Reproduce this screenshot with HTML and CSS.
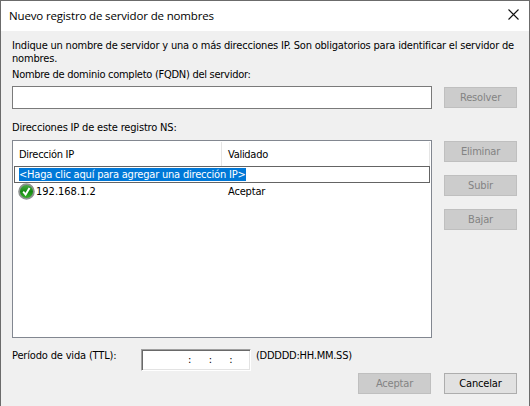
FILE: index.html
```
<!DOCTYPE html>
<html lang="es">
<head>
<meta charset="utf-8">
<title>Nuevo registro de servidor de nombres</title>
<link rel="stylesheet" href="styles.css">
</head>
<body>
<main class="dialog">
  <header class="titlebar">
    <h1 class="title">Nuevo registro de servidor de nombres</h1>
    <svg class="close" width="11" height="11" viewBox="0 0 11 11"><path d="M.5.5l10 10M10.500.5l-10 10" stroke="#111" stroke-width="1.1" fill="none"/></svg>
  </header>
  <div class="content">
    <p class="intro"><span class="intro-first">Indique un nombre de servidor y una o más direcciones IP. Son obligatorios para identificar el servidor de</span><br>nombres.</p>
    <p class="label fqdn">Nombre de dominio completo (FQDN) del servidor:</p>
    <div class="row name-row">
      <div class="field"></div>
      <div class="btn disabled">Resolver</div>
    </div>
    <p class="label ns">Direcciones IP de este registro NS:</p>
    <div class="row">
      <div class="list">
        <div class="list-head"><div class="col first">Dirección IP</div><div class="col">Validado</div></div>
        <div class="edit"><span class="selected">&lt;Haga clic aquí para agregar una dirección IP&gt;</span></div>
        <div class="item">
          <svg class="check" width="17" height="17" viewBox="0 0 17 17">
            <defs><linearGradient id="g" x1="0" y1="0" x2="0" y2="1"><stop offset="0" stop-color="#4fae4c"/><stop offset=".5" stop-color="#168a12"/><stop offset="1" stop-color="#39b52c"/></linearGradient></defs>
            <circle cx="8.500" cy="8.500" r="7.400" fill="url(#g)" stroke="#8d9290" stroke-width="1.800"/>
            <path d="M5.200 8.700l2.400 2.900 3.900-6.600" fill="none" stroke="#fff" stroke-width="1.900"/>
          </svg>
          <span class="ip">192.168.1.2</span><span class="status">Aceptar</span>
        </div>
      </div>
      <div class="actions">
        <div class="btn disabled">Eliminar</div>
        <div class="btn disabled">Subir</div>
        <div class="btn disabled">Bajar</div>
      </div>
    </div>
    <div class="ttl">
      <span class="ttl-label">Período de vida (TTL):</span>
      <div class="ttl-field"><span>:</span><span>:</span><span>:</span></div>
      <span class="format">(DDDDD:HH.MM.SS)</span>
    </div>
    <footer class="footer">
      <div class="btn disabled">Aceptar</div>
      <div class="btn">Cancelar</div>
    </footer>
  </div>
</main>
</body>
</html>
```
FILE: styles.css
```
* { box-sizing: border-box; }
body { margin: 0; }
p, h1 { margin: 0; font-weight: normal; }
.dialog {
  width: 530px; height: 406px; overflow: hidden;
  background: #f0f0f0; color: #000;
  border: 1px solid #6b6b6b; border-bottom: 0;
  font: 11px/13px "DejaVu Sans Condensed", "DejaVu Sans", sans-serif;
  font-stretch: condensed;
  letter-spacing: -0.17px;
  white-space: nowrap;
}
.titlebar { height: 30px; background: #fff; display: flex; justify-content: space-between; padding: 0 10px 0 8px; }
.title { font: 11.5px/16px "Open Sans", sans-serif; padding-top: 7px; letter-spacing: -0.15px; }
.close { margin-top: 8px; }
.content { padding: 8px 11px 0; }
.intro { height: 26px; }
.intro-first { letter-spacing: -0.19px; }
.label { height: 13px; }
.fqdn { margin-top: 3px; letter-spacing: -0.27px; }
.row { display: flex; gap: 12px; }
.name-row { margin-top: 5px; }
.field { width: 420px; height: 23px; background: #fff; border: 1px solid #7a7a7a; }
.btn {
  width: 73px; height: 21px; border: 1px solid #adadad; background: #e1e1e1;
  text-align: center; line-height: 20px;
}
.disabled { background: #ccc; border-color: #bfbfbf; color: #838383; }
.name-row .btn { margin-top: 1px; }
.ns { margin: 12px 0 6px; }
.list { width: 420px; height: 198px; background: #fff; border: 1px solid #828790; padding: 1px; }
.list-head { height: 24px; display: flex; width: 416px; border-right: 1px solid #e5e5e5; letter-spacing: -0.28px; }
.col { padding: 6px 0 0 6px; }
.first { width: 208px; padding-left: 5px; border-right: 1px solid #e5e5e5; }
.edit { width: 416px; height: 17px; border: 1px solid #646464; padding: 1px 0 0 4px; }
.selected { display: block; width: 227px; height: 13px; background: #0078d7; color: #fff; line-height: 13px; letter-spacing: -0.2px; }
.item { display: flex; height: 17px; line-height: 18px; padding-left: 4px; }
.ip { width: 192px; margin-left: 1px; letter-spacing: 0; }
.actions { display: flex; flex-direction: column; gap: 13px; padding-top: 1px; }
.ttl { display: flex; margin-top: 11px; height: 22px; }
.ttl-label { width: 129px; }
.ttl-field {
  width: 110px; height: 22px; background: #fff; border: 1px solid;
  border-color: #a0a0a0 #fff #fff #a0a0a0;
  box-shadow: inset 1px 1px #696969, inset -1px -1px #e3e3e3;
  display: flex; padding: 3px 0 0 46px;
}
.ttl-field span { width: 21px; }
.format { margin-left: 5px; letter-spacing: -0.25px; }
.footer { display: flex; justify-content: flex-end; gap: 13px; margin: 2px 1px 0 0; }
```
